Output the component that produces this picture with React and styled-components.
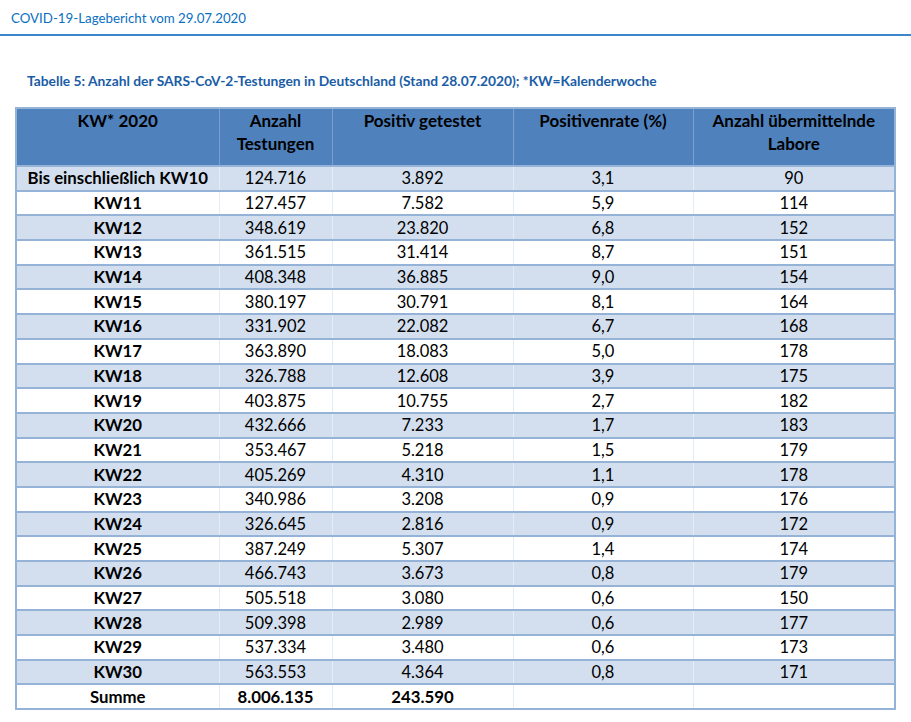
import styled, { createGlobalStyle } from 'styled-components';

const GlobalStyle = createGlobalStyle`
    body {
        margin: 0;
        background: #fff;
        font-family: Lato, "Open Sans", sans-serif;
    }
`;

const rows = [
    ['Bis einschließlich KW10', '124.716', '3.892', '3,1', '90'],
    ['KW11', '127.457', '7.582', '5,9', '114'],
    ['KW12', '348.619', '23.820', '6,8', '152'],
    ['KW13', '361.515', '31.414', '8,7', '151'],
    ['KW14', '408.348', '36.885', '9,0', '154'],
    ['KW15', '380.197', '30.791', '8,1', '164'],
    ['KW16', '331.902', '22.082', '6,7', '168'],
    ['KW17', '363.890', '18.083', '5,0', '178'],
    ['KW18', '326.788', '12.608', '3,9', '175'],
    ['KW19', '403.875', '10.755', '2,7', '182'],
    ['KW20', '432.666', '7.233', '1,7', '183'],
    ['KW21', '353.467', '5.218', '1,5', '179'],
    ['KW22', '405.269', '4.310', '1,1', '178'],
    ['KW23', '340.986', '3.208', '0,9', '176'],
    ['KW24', '326.645', '2.816', '0,9', '172'],
    ['KW25', '387.249', '5.307', '1,4', '174'],
    ['KW26', '466.743', '3.673', '0,8', '179'],
    ['KW27', '505.518', '3.080', '0,6', '150'],
    ['KW28', '509.398', '2.989', '0,6', '177'],
    ['KW29', '537.334', '3.480', '0,6', '173'],
    ['KW30', '563.553', '4.364', '0,8', '171'],
];

const columns = [203, 113, 181, 180, 202];

function App() {
    return (
        <Page>
            <GlobalStyle />
            <ReportHeader>COVID-19-Lagebericht vom 29.07.2020</ReportHeader>
            <Caption>
                Tabelle 5: Anzahl der SARS-CoV-2-Testungen in Deutschland (Stand 28.07.2020); *KW=Kalenderwoche
            </Caption>
            <Table>
                <colgroup>
                    {columns.map((w, i) => <col key={i} style={{ width: w }} />)}
                </colgroup>
                <thead>
                    <tr>
                        <Th>KW* 2020</Th>
                        <Th>Anzahl<br />Testungen</Th>
                        <Th>Positiv getestet</Th>
                        <Th>Positivenrate (%)</Th>
                        <Th>Anzahl übermittelnde<br />Labore</Th>
                    </tr>
                </thead>
                <tbody>
                    {rows.map((r, i) => (
                        <Row key={r[0]} $shaded={i % 2 === 0}>
                            <Td $bold>{r[0]}</Td>
                            <Td>{r[1]}</Td>
                            <Td>{r[2]}</Td>
                            <Td>{r[3]}</Td>
                            <Td>{r[4]}</Td>
                        </Row>
                    ))}
                    <Row>
                        <Td $bold>Summe</Td>
                        <Td $bold>8.006.135</Td>
                        <Td $bold>243.590</Td>
                        <Td />
                        <Td />
                    </Row>
                </tbody>
            </Table>
        </Page>
    );
}

const Page = styled.div`
    width: 911px;
    height: 722px;
    overflow: hidden;
    padding-top: 9px;
    box-sizing: border-box;
`;

const ReportHeader = styled.div`
    color: #0a6fc2;
    font-size: 13.3px;
    line-height: 18px;
    padding: 0 0 7px 11px;
    border-bottom: 2px solid #3c86cc;
`;

const Caption = styled.div`
    color: #1a5da6;
    font-size: 13.8px;
    font-weight: 700;
    padding: 36px 0 0 27px;
    line-height: 17px;
`;

const Table = styled.table`
    margin: 18px 0 0 15px;
    width: 881px;
    table-layout: fixed;
    border-collapse: collapse;
    border: 2px solid #95b3d7;
    font-size: 16.5px;
    color: #000;
`;

const Th = styled.th`
    background: #4f81bd;
    height: 56px;
    vertical-align: top;
    padding: 0 4px;
    font-weight: 700;
    font-size: 17px;
    line-height: 23px;
    border-left: 1px solid #7a9fd0;
    border-bottom: 2px solid #95b3d7;
`;

const Row = styled.tr`
    background: ${(p) => (p.$shaded ? '#d3dfee' : '#fff')};
`;

const Td = styled.td`
    height: 22.7px;
    padding: 0 4px;
    text-align: center;
    vertical-align: middle;
    font-weight: ${(p) => (p.$bold ? 700 : 400)};
    font-size: ${(p) => (p.$bold ? '16.8px' : '16.5px')};
    line-height: 20px;
    border-bottom: 2px solid #95b3d7;
    border-left: 1px solid #e4ecf6;
    white-space: nowrap;
`;

export default App;
